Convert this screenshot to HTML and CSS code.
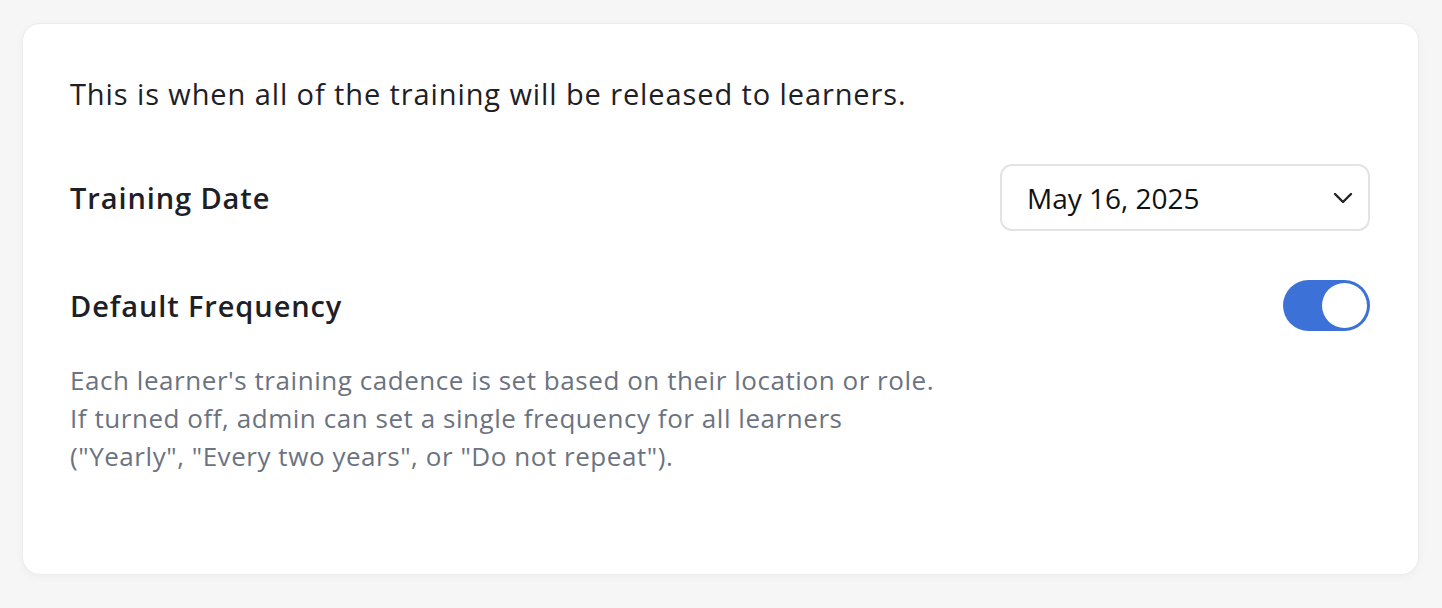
FILE: index.html
```html
<!DOCTYPE html>
<html lang="en">
<head>
  <meta charset="UTF-8" />
  <meta name="viewport" content="width=device-width, initial-scale=1.0"/>
  <title>Training Schedule</title>
  <link rel="stylesheet" href="styles.css">
</head>
<body>
  <div class="card">
    <p class="intro">This is when all of the training will be released to learners.</p>

    <div class="row date-row">
      <span class="label">Training Date</span>
      <button class="date-select">
        <span>May 16, 2025</span>
        <svg width="20" height="12" viewBox="0 0 20 12" fill="none" stroke="#1f2328" stroke-width="2.4" stroke-linecap="round" stroke-linejoin="round">
          <path d="M2 2l8 8 8-8"/>
        </svg>
      </button>
    </div>

    <div class="row freq-row">
      <span class="label">Default Frequency</span>
      <span class="toggle on"><span class="knob"></span></span>
    </div>

    <p class="help">
      Each learner's training cadence is set based on their location or role.<br>
      If turned off, admin can set a single frequency for all learners<br>
      ("Yearly", "Every two years", or "Do not repeat").
    </p>
  </div>
</body>
</html>
```

FILE: styles.css
```css
body {
  margin: 0;
  padding: 23px 23px 23px 22px;
  background: #f6f6f6;
  font-family: "Open Sans", "Noto Sans", sans-serif;
  color: #1d2025;
}

.card {
  background: #fff;
  border: 1px solid #ececec;
  border-radius: 18px;
  box-shadow: 0 2px 8px rgba(0, 0, 0, 0.04);
  padding: 50px 48px 99px 47px;
}

.intro {
  margin: 0 0 50px;
  font-size: 29px;
  line-height: 40px;
  letter-spacing: 0.9px;
}

.row {
  display: flex;
  justify-content: space-between;
  align-items: center;
}

.label {
  font-size: 29px;
  font-weight: 600;
  letter-spacing: 0.9px;
}

.date-select {
  display: flex;
  align-items: center;
  justify-content: space-between;
  box-sizing: border-box;
  width: 370px;
  height: 67px;
  padding: 0 15px 0 25px;
  background: #fff;
  border: 2px solid #e3e3e3;
  border-radius: 12px;
  font-family: inherit;
  font-size: 28px;
  color: #111;
  cursor: pointer;
}

.freq-row {
  margin-top: 49px;
}

.toggle {
  display: flex;
  align-items: center;
  justify-content: flex-end;
  width: 87px;
  height: 51px;
  padding: 3px;
  box-sizing: border-box;
  border-radius: 26px;
  background: #3c71d8;
}

.knob {
  width: 45px;
  height: 45px;
  border-radius: 50%;
  background: #fff;
}

.help {
  margin: 30px 0 0;
  font-size: 26px;
  line-height: 38px;
  letter-spacing: 0.55px;
  color: #6b7380;
}
```
